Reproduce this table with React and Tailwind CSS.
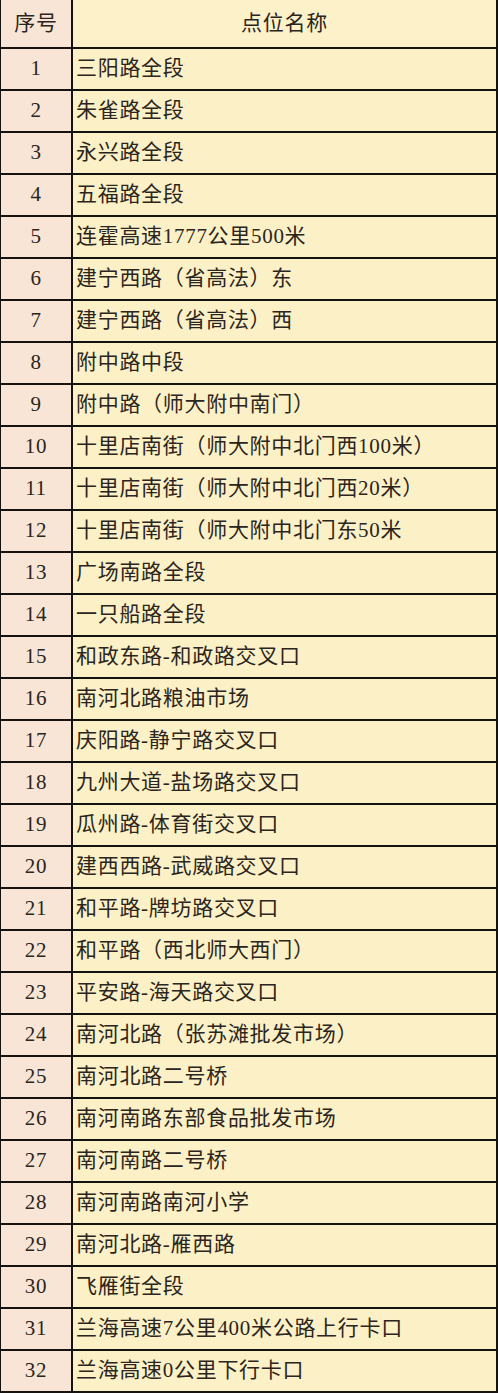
import React from "react";

const rows = [
  "三阳路全段",
  "朱雀路全段",
  "永兴路全段",
  "五福路全段",
  "连霍高速1777公里500米",
  "建宁西路（省高法）东",
  "建宁西路（省高法）西",
  "附中路中段",
  "附中路（师大附中南门）",
  "十里店南街（师大附中北门西100米）",
  "十里店南街（师大附中北门西20米）",
  "十里店南街（师大附中北门东50米",
  "广场南路全段",
  "一只船路全段",
  "和政东路-和政路交叉口",
  "南河北路粮油市场",
  "庆阳路-静宁路交叉口",
  "九州大道-盐场路交叉口",
  "瓜州路-体育街交叉口",
  "建西西路-武威路交叉口",
  "和平路-牌坊路交叉口",
  "和平路（西北师大西门）",
  "平安路-海天路交叉口",
  "南河北路（张苏滩批发市场）",
  "南河北路二号桥",
  "南河南路东部食品批发市场",
  "南河南路二号桥",
  "南河南路南河小学",
  "南河北路-雁西路",
  "飞雁街全段",
  "兰海高速7公里400米公路上行卡口",
  "兰海高速0公里下行卡口",
];

const font = {
  fontFamily: '"Liberation Serif", "Noto Sans CJK SC", serif',
};

export default function App() {
  return (
    <div
      className="w-[498px] h-[1393px] bg-[#fcf0c6] border-l border-r-2 border-b-2 border-[#151210] text-[#2a2520] text-[21px] tracking-[0.7px]"
      style={font}
    >
      <div className="flex h-[47px]">
        <div className="w-[72px] shrink-0 bg-[#f8e5d5] border-r-2 border-[#151210] flex items-center justify-center">
          序号
        </div>
        <div className="flex-1 bg-[#fcf1c9] flex items-center justify-center">
          点位名称
        </div>
      </div>
      {rows.map((name, i) => (
        <div key={i} className="flex h-[42px] border-t-2 border-[#151210]">
          <div className="w-[72px] shrink-0 bg-[#f8e5d5] border-r-2 border-[#151210] flex items-center justify-center">
            {i + 1}
          </div>
          <div className="flex-1 bg-[#fcf0c6] flex items-center pl-[3px] whitespace-nowrap overflow-hidden">
            {name}
          </div>
        </div>
      ))}
    </div>
  );
}
